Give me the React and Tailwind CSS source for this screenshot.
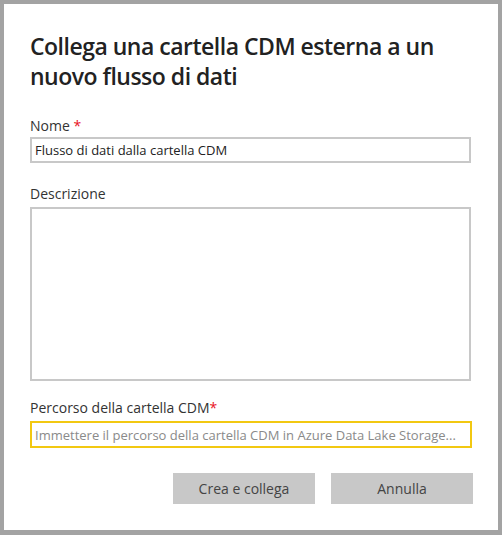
export default function App() {
  return (
    <div className="w-[502px] h-[535px] bg-[#a3a3a3] pt-[4px] px-[4px] pb-[5px] font-['Open_Sans',sans-serif]">
      <div className="h-full bg-white pl-[26px] pr-[27px] pt-[27px] text-[#333]">
        <h1 className="text-[23px] leading-[30px] font-semibold text-[#222] tracking-[-0.5px]">
          Collega una cartella CDM esterna a un nuovo flusso di dati
        </h1>

        <div className="mt-[25px]">
          <label className="block text-[14px] leading-[20px] text-[#333]">
            Nome <span className="text-[#e81123]">*</span>
          </label>
          <input
            className="mt-[1px] block w-full h-[26px] border-2 border-[#c8c8c8] px-[3px] text-[13px] text-[#222] outline-none"
            defaultValue="Flusso di dati dalla cartella CDM"
          />
        </div>

        <div className="mt-[21px]">
          <label className="block text-[14px] leading-[20px] text-[#333]">Descrizione</label>
          <textarea className="mt-[3px] block w-[441px] h-[174px] border-2 border-[#c8c8c8] resize-none outline-none" />
        </div>

        <div className="mt-[17px]">
          <label className="block text-[14px] leading-[20px] text-[#333]">
            Percorso della cartella CDM<span className="text-[#e81123]">*</span>
          </label>
          <input
            className="mt-[3px] block w-[442px] h-[27px] border-2 border-[#f2c811] px-[3px] text-[13px] text-[#222] placeholder:text-[#8a8a8a] outline-none"
            placeholder="Immettere il percorso della cartella CDM in Azure Data Lake Storage..."
          />
        </div>

        <div className="mt-[25px] flex justify-end gap-[16px] mr-[-2px]">
          <button className="w-[142px] h-[31px] bg-[#c8c8c8] text-[14px] text-[#444]">Crea e collega</button>
          <button className="w-[142px] h-[31px] bg-[#c8c8c8] text-[14px] text-[#444]">Annulla</button>
        </div>
      </div>
    </div>
  );
}
